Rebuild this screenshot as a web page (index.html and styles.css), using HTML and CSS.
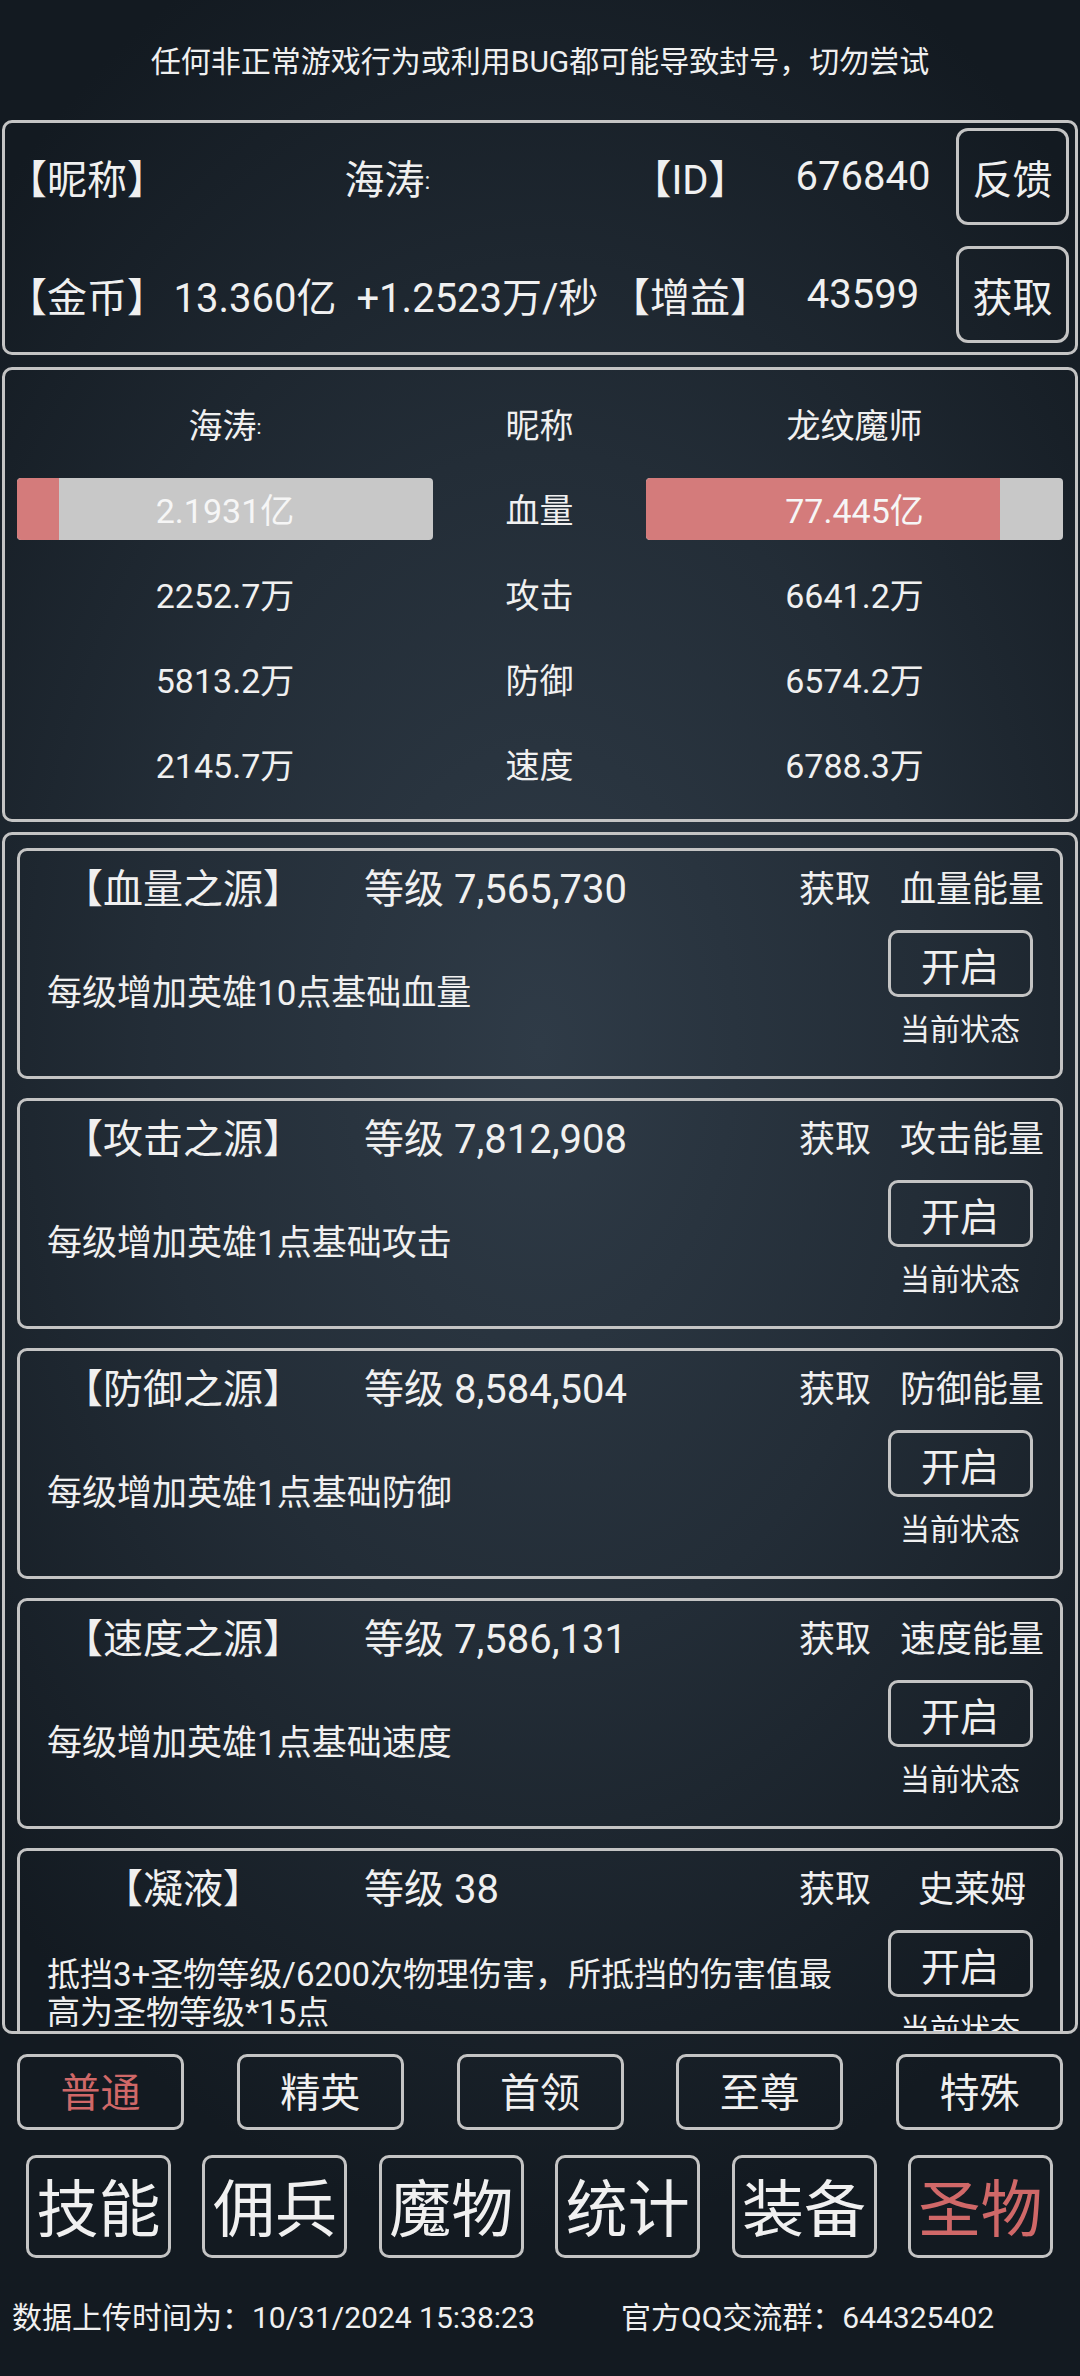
FILE: index.html
```html
<!DOCTYPE html>
<html lang="zh-CN">
<head>
  <meta charset="UTF-8">
  <meta name="viewport" content="width=device-width, initial-scale=1.0">
  <title>圣物</title>
  <link rel="stylesheet" href="styles.css">
</head>
<body>
  <div class="page">
    <div class="notice">任何非正常游戏行为或利用BUG都可能导致封号，切勿尝试</div>

    <div class="panel info">
      <span class="label">【昵称】</span>
      <span class="value name">海涛<span class="mark">:</span></span>
      <span class="value">【ID】</span>
      <span class="value">676840</span>
      <button class="btn info-btn">反馈</button>

      <span class="label">【金币】</span>
      <span class="value">13.360亿</span>
      <span class="value">+1.2523万/秒</span>
      <span class="value">【增益】</span>
      <span class="value">43599</span>
      <button class="btn info-btn">获取</button>
    </div>

    <div class="panel compare">
      <span>海涛<span class="mark">:</span></span><span>昵称</span><span>龙纹魔师</span>
      <div class="bar"><div class="bar-fill" style="width: 10%"></div><span>2.1931亿</span></div>
      <span>血量</span>
      <div class="bar"><div class="bar-fill" style="width: 85%"></div><span>77.445亿</span></div>
      <span>2252.7万</span><span>攻击</span><span>6641.2万</span>
      <span>5813.2万</span><span>防御</span><span>6574.2万</span>
      <span>2145.7万</span><span>速度</span><span>6788.3万</span>
    </div>

    <div class="panel relics" id="relic-list"></div>

    <div class="tabs">
      <button class="btn tab active">普通</button>
      <button class="btn tab">精英</button>
      <button class="btn tab">首领</button>
      <button class="btn tab">至尊</button>
      <button class="btn tab">特殊</button>
    </div>

    <div class="menu">
      <button class="btn menu-btn">技能</button>
      <button class="btn menu-btn">佣兵</button>
      <button class="btn menu-btn">魔物</button>
      <button class="btn menu-btn">统计</button>
      <button class="btn menu-btn">装备</button>
      <button class="btn menu-btn active">圣物</button>
    </div>

    <div class="footer">
      <span class="upload">数据上传时间为：10/31/2024 15:38:23</span>
      <span>官方QQ交流群：644325402</span>
    </div>
  </div>

  <script>
    const relics = [
      {title: "【血量之源】", level: "7,565,730", source: "血量能量", desc: "每级增加英雄10点基础血量"},
      {title: "【攻击之源】", level: "7,812,908", source: "攻击能量", desc: "每级增加英雄1点基础攻击"},
      {title: "【防御之源】", level: "8,584,504", source: "防御能量", desc: "每级增加英雄1点基础防御"},
      {title: "【速度之源】", level: "7,586,131", source: "速度能量", desc: "每级增加英雄1点基础速度"},
      {title: "【凝液】", level: "38", source: "史莱姆", desc: "抵挡3+圣物等级/6200次物理伤害，所抵挡的伤害值最高为圣物等级*15点", long: true}
    ];

    const relicList = document.getElementById("relic-list");

    relics.forEach((relic) => {
      const card = document.createElement("div");
      card.className = "relic";
      card.innerHTML = `
        <div class="relic-head">
          <span class="relic-title">${relic.title}</span>
          <span class="relic-level">等级 ${relic.level}</span>
          <span class="relic-get">获取</span>
          <span class="relic-source">${relic.source}</span>
        </div>
        <div class="relic-body">
          <div class="relic-desc${relic.long ? " long" : ""}"><span>${relic.desc}</span></div>
          <div class="relic-side">
            <button class="btn open-btn">开启</button>
            <span class="relic-state">当前状态</span>
          </div>
        </div>
      `;
      relicList.appendChild(card);
    });
  </script>
</body>
</html>
```

FILE: styles.css
```css
* {
  box-sizing: border-box;
}
body {
  margin: 0;
  background-color: #141b22;
  color: #f0f0f0;
  font-family: Roboto, "Noto Sans CJK SC", sans-serif;
}
.page {
  width: 1080px;
  height: 2376px;
  overflow: hidden;
  background: radial-gradient(ellipse 72% 50% at 50% 44%, #2f3b47 0%, #232d37 50%, #131a21 100%);
}
.notice {
  height: 118px;
  margin-bottom: 2px;
  display: flex;
  align-items: center;
  justify-content: center;
  font-size: 30px;
}
.panel {
  margin: 0 2px;
  border: 3px solid #c4c4c4;
  border-radius: 10px;
}
.btn {
  display: flex;
  align-items: center;
  justify-content: center;
  padding: 0;
  background: transparent;
  color: #f0f0f0;
  font-family: inherit;
  border: 3px solid #c4c4c4;
  border-radius: 12px;
}
.mark {
  font-size: 0.6em;
  vertical-align: 0.2em;
}

/* player info */
.info {
  height: 235px;
  padding: 5px 6px 9px 2px;
  display: grid;
  grid-template-columns: 158px 180px 265px 160px 186px 113px;
  grid-template-rows: 97px 97px;
  row-gap: 21px;
  align-items: center;
  font-size: 40px;
}
.info .value {
  text-align: center;
}
.info .name {
  grid-column: span 2;
}
.info-btn {
  height: 97px;
  font-size: 40px;
}

/* battle compare */
.compare {
  margin-top: 12px;
  height: 455px;
  padding: 11px 12px 13px;
  display: grid;
  grid-template-columns: 416px 213px 417px;
  grid-auto-rows: 85px;
  align-items: center;
  text-align: center;
  font-size: 34px;
}
.bar {
  position: relative;
  height: 62px;
  border-radius: 4px;
  background: #c8c8c8;
  overflow: hidden;
  display: flex;
  align-items: center;
  justify-content: center;
}
.bar-fill {
  position: absolute;
  left: 0;
  top: 0;
  bottom: 0;
  background: #d47b7b;
  border-radius: 4px 0 0 4px;
}
.bar span {
  position: relative;
  color: #f6f6f6;
}

/* relic list */
.relics {
  margin-top: 10px;
  height: 1202px;
  padding: 13px 12px;
  overflow: hidden;
  display: flex;
  flex-direction: column;
  gap: 19px;
}
.relic {
  flex: 0 0 231px;
  border: 3px solid #c4c4c4;
  border-radius: 10px;
  display: flex;
  flex-direction: column;
}
.relic-head {
  height: 70px;
  display: flex;
  align-items: center;
  font-size: 36px;
}
.relic-title {
  width: 326px;
  text-align: center;
  font-size: 40px;
}
.relic-level {
  flex: 1;
  padding-left: 18px;
  font-size: 40px;
}
.relic-get {
  width: 98px;
  text-align: center;
}
.relic-source {
  width: 176px;
  text-align: center;
}
.relic-body {
  flex: 1;
  display: flex;
}
.relic-desc {
  width: 827px;
  padding: 0 0 10px 27px;
  display: flex;
  align-items: center;
  font-size: 35px;
  line-height: 38px;
}
.relic-desc.long {
  font-size: 33px;
}
.relic-side {
  width: 180px;
  margin: 0 10px 0 auto;
  display: flex;
  flex-direction: column;
  align-items: center;
}
.open-btn {
  margin-top: 9px;
  width: 145px;
  height: 67px;
  font-size: 39px;
  border-radius: 10px;
}
.relic-state {
  margin-top: 15px;
  font-size: 30px;
  line-height: 36px;
}

/* bottom navigation */
.tabs {
  margin-top: 20px;
  padding: 0 17px;
  display: flex;
  justify-content: space-between;
}
.tab {
  width: 167px;
  height: 76px;
  padding-bottom: 4px;
  font-size: 40px;
  border-radius: 10px;
}
.menu {
  margin-top: 25px;
  padding: 0 27px 0 26px;
  display: flex;
  justify-content: space-between;
}
.menu-btn {
  width: 145px;
  height: 103px;
  padding-bottom: 4px;
  font-size: 62px;
  border-radius: 10px;
}
.btn.active {
  color: #d06868;
}
.footer {
  margin-top: 39px;
  height: 36px;
  padding-left: 12px;
  display: flex;
  align-items: center;
  font-size: 30px;
}
.upload {
  width: 609px;
}
```
